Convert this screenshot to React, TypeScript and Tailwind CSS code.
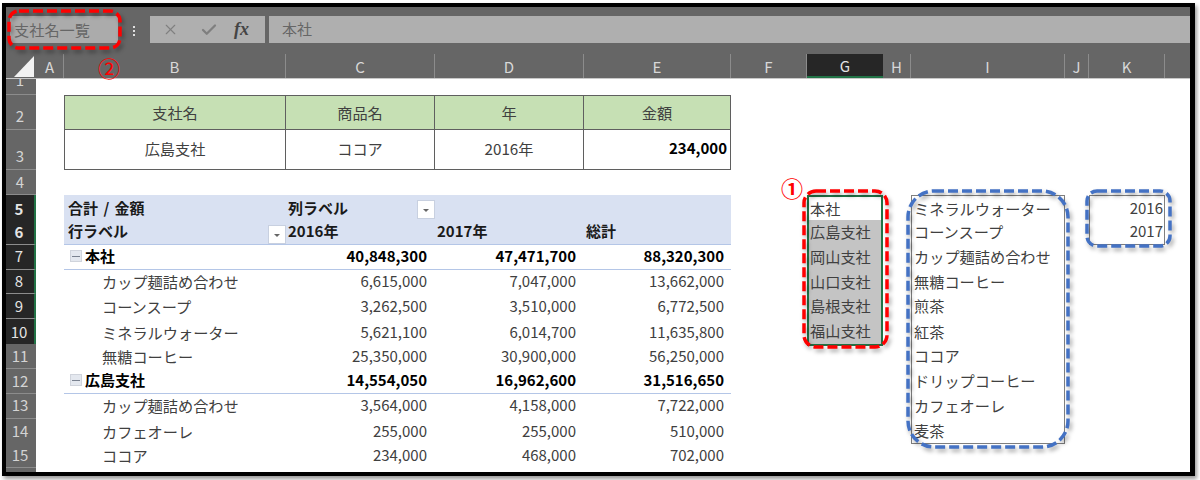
import { Check, X } from "lucide-react";
import type { ReactNode } from "react";

const font = "font-['Noto_Sans_CJK_JP','Liberation_Sans',sans-serif]";
const gridCols =
  "grid grid-cols-[30px_28px_222px_149px_149px_147px_76px_76px_28px_154px_24px_76px_25px]";

const columnHeads = ["A", "B", "C", "D", "E", "F", "G", "H", "I", "J", "K", ""];

const branches = ["本社", "広島支社", "岡山支社", "山口支社", "島根支社", "福山支社"];
const products = [
  "ミネラルウォーター",
  "コーンスープ",
  "カップ麺詰め合わせ",
  "無糖コーヒー",
  "煎茶",
  "紅茶",
  "ココア",
  "ドリップコーヒー",
  "カフェオーレ",
  "麦茶",
];
const years = ["2016", "2017"];

const pivotRows = [
  { n: 7, label: "本社", c: "40,848,300", d: "47,471,700", e: "88,320,300", group: true },
  { n: 8, label: "カップ麺詰め合わせ", c: "6,615,000", d: "7,047,000", e: "13,662,000" },
  { n: 9, label: "コーンスープ", c: "3,262,500", d: "3,510,000", e: "6,772,500" },
  { n: 10, label: "ミネラルウォーター", c: "5,621,100", d: "6,014,700", e: "11,635,800" },
  { n: 11, label: "無糖コーヒー", c: "25,350,000", d: "30,900,000", e: "56,250,000" },
  { n: 12, label: "広島支社", c: "14,554,050", d: "16,962,600", e: "31,516,650", group: true },
  { n: 13, label: "カップ麺詰め合わせ", c: "3,564,000", d: "4,158,000", e: "7,722,000" },
  { n: 14, label: "カフェオーレ", c: "255,000", d: "255,000", e: "510,000" },
  { n: 15, label: "ココア", c: "234,000", d: "468,000", e: "702,000" },
];

function RowHead({ n, active }: { n: number; active: boolean }) {
  return (
    <div
      className={`flex items-center justify-center border-b border-[#8c8c8c] pr-[2px] text-[15px] ${
        active
          ? "border-r-2 border-r-[#217346] bg-[#262626] text-[#e4e4e4]"
          : "bg-[#666666] text-[#d4d4d4]"
      }`}
    >
      {n}
    </div>
  );
}

function FilterButton() {
  return (
    <div className="absolute top-[5px] right-0 flex h-[19px] w-[18px] items-center justify-center border border-[#c8d0e0] bg-white">
      <div className="mt-[2px] h-0 w-0 border-x-[3px] border-t-[3px] border-x-transparent border-t-[#666666]" />
    </div>
  );
}

function ListCells({ n }: { n: number }) {
  const branch = branches[n - 5];
  const product = products[n - 5];
  const year = years[n - 5];
  return (
    <>
      <div />
      <div
        className={`flex items-center pl-[1px] text-[15.2px] text-[#404040] ${
          branch ? "border-x-2 border-[#217346]" : ""
        } ${branch && n > 5 ? "bg-[#c4c4c4]" : ""} ${n === 5 ? "border-t-2 pb-[4px]" : "pb-[2px]"} ${
          n === 10 ? "border-b-2" : ""
        }`}
      >
        {branch}
      </div>
      <div />
      <div
        className={`flex items-center pl-[2px] text-[15.2px] whitespace-nowrap text-[#404040] ${
          product ? "border-x border-[#7f7f7f]" : ""
        } ${n === 5 ? "border-t pb-[3px]" : "pb-[2px]"} ${n === 14 ? "border-b" : ""}`}
      >
        {product}
      </div>
      <div />
      <div
        className={`flex items-center justify-end pr-[1px] text-[15px] text-[#404040] ${
          year ? "border-x border-[#7f7f7f]" : ""
        } ${n === 5 ? "border-t pb-[3px]" : "pb-[2px]"} ${n === 6 ? "border-b" : ""}`}
      >
        {year}
      </div>
      <div />
    </>
  );
}

function Dashed({
  className,
  width,
  height,
  radius,
  color,
}: {
  className: string;
  width: number;
  height: number;
  radius: number;
  color: string;
}) {
  return (
    <svg
      className={`pointer-events-none absolute drop-shadow-[2px_3px_2px_rgba(0,0,0,0.35)] ${className}`}
      width={width}
      height={height}
    >
      <rect
        x="2"
        y="2"
        width={width - 4}
        height={height - 4}
        rx={radius}
        fill="none"
        stroke={color}
        strokeWidth="3.5"
        strokeDasharray="10 4"
      />
    </svg>
  );
}

function TopCell({ children, className }: { children: ReactNode; className: string }) {
  return <div className={`flex items-center border-r border-b border-[#5f5f5f] ${className}`}>{children}</div>;
}

export default function App() {
  return (
    <div className={`h-[480px] w-[1200px] overflow-hidden bg-white pt-[3px] pl-[2px] ${font}`}>
      <div className="relative h-[473px] w-[1193px] overflow-hidden border-y-4 border-r-[5px] border-l-4 border-black bg-white shadow-[2px_3px_4px_rgba(0,0,0,0.4)]">
        {/* formula bar */}
        <div className="flex h-[47px] items-start bg-[#666666] pt-[9px] pl-[4px]">
          <div className="flex h-[27px] w-[108px] items-center bg-[#ababab] pb-[1px] pl-[4px] text-[15.2px] text-[#666666]">
            支社名一覧
          </div>
          <div className="flex w-[32px] flex-col items-center gap-[2px] pt-[10px]">
            <span className="size-[2px] bg-[#e0e0e0]" />
            <span className="size-[2px] bg-[#e0e0e0]" />
            <span className="size-[2px] bg-[#e0e0e0]" />
          </div>
          <div className="flex h-[27px] w-[115px] items-center bg-[#afafaf] text-[#7f7f7f]">
            <X className="ml-[12px]" size={17} strokeWidth={1.6} />
            <Check className="ml-[21px]" size={18} strokeWidth={3} />
            <span className="ml-[16px] font-['Liberation_Serif',serif] text-[18px] font-bold text-[#444444] italic">
              fx
            </span>
          </div>
          <div className="ml-[4px] flex h-[27px] flex-1 items-center bg-[#afafaf] pb-[1px] pl-[13px] text-[15px] text-[#666666]">
            本社
          </div>
        </div>

        {/* column heads */}
        <div className={`${gridCols} h-[25px] border-b border-[#c8c8c8] bg-[#666666]`}>
          <div className="flex items-end justify-end pr-[2px] pb-[1px]">
            <div className="h-0 w-0 border-b-[21px] border-l-[20px] border-b-[#f2f2f2] border-l-transparent" />
          </div>
          {columnHeads.map((col, i) => (
            <div
              key={i}
              className={`flex items-center justify-center text-[15px] leading-none ${
                col === "G"
                  ? "border-b-2 border-[#217346] bg-[#262626] text-[#e4e4e4]"
                  : `${col ? "border-r border-[#8c8c8c]" : ""} text-[#d8d8d8]`
              }`}
            >
              {col}
            </div>
          ))}
        </div>

        {/* row 1 */}
        <div className={`${gridCols} h-[16px]`}>
          <div className="flex justify-center overflow-hidden border-b border-[#8c8c8c] bg-[#666666] text-[15px] leading-none text-[#d4d4d4]">
            <span className="-mt-[7px] pr-[2px]">1</span>
          </div>
        </div>

        {/* rows 2 and 3: lookup table */}
        <div className={`${gridCols} h-[35px] text-[15.2px] text-[#404040]`}>
          <div className="flex items-end justify-center border-b border-[#8c8c8c] bg-[#666666] pr-[2px] pb-[2px] text-[15px] text-[#d4d4d4]">
            2
          </div>
          <div />
          <TopCell className="justify-center border-t border-l bg-[#c6e0b4] pb-[1px]">支社名</TopCell>
          <TopCell className="justify-center border-t bg-[#c6e0b4] pb-[1px]">商品名</TopCell>
          <TopCell className="justify-center border-t bg-[#c6e0b4] pb-[1px]">年</TopCell>
          <TopCell className="justify-center border-t bg-[#c6e0b4] pb-[1px]">金額</TopCell>
        </div>
        <div className={`${gridCols} h-[40px] text-[15.2px] text-[#404040]`}>
          <div className="flex items-end justify-center border-b border-[#8c8c8c] bg-[#666666] pr-[2px] pb-[2px] text-[15px] text-[#d4d4d4]">
            3
          </div>
          <div />
          <TopCell className="justify-center border-l pb-[2px]">広島支社</TopCell>
          <TopCell className="justify-center pb-[2px]">ココア</TopCell>
          <TopCell className="justify-center pb-[2px]">2016年</TopCell>
          <TopCell className="justify-end pr-[3px] pb-[2px] text-[15px] font-bold text-black">234,000</TopCell>
        </div>

        {/* row 4 */}
        <div className={`${gridCols} h-[25px]`}>
          <RowHead n={4} active={false} />
        </div>

        {/* rows 5 and 6: pivot header */}
        <div className={`${gridCols} h-[24.85px] text-[15px] font-bold text-[#1a1a1a]`}>
          <RowHead n={5} active />
          <div />
          <div className="flex items-center bg-[#d9e1f2] pb-[2px] pl-[4px] [word-spacing:2px]">合計 / 金額</div>
          <div className="relative flex items-center bg-[#d9e1f2] pb-[2px] pl-[2px]">
            列ラベル
            <FilterButton />
          </div>
          <div className="bg-[#d9e1f2]" />
          <div className="bg-[#d9e1f2]" />
          <div className="contents font-normal">
            <ListCells n={5} />
          </div>
        </div>
        <div className={`${gridCols} h-[24.85px] text-[15px] font-bold text-[#1a1a1a]`}>
          <RowHead n={6} active />
          <div />
          <div className="relative flex items-center border-b border-[#b4c6e7] bg-[#d9e1f2] pb-[1px] pl-[4px]">
            行ラベル
            <FilterButton />
          </div>
          <div className="flex items-center border-b border-[#b4c6e7] bg-[#d9e1f2] pb-[1px] pl-[2px]">2016年</div>
          <div className="flex items-center border-b border-[#b4c6e7] bg-[#d9e1f2] pb-[1px] pl-[2px]">2017年</div>
          <div className="flex items-center border-b border-[#b4c6e7] bg-[#d9e1f2] pb-[1px] pl-[2px]">総計</div>
          <div className="contents font-normal">
            <ListCells n={6} />
          </div>
        </div>

        {/* rows 7 to 15: pivot body */}
        {pivotRows.map((row) => (
          <div key={row.n} className={`${gridCols} h-[24.85px] text-[15px] text-[#404040]`}>
            <RowHead n={row.n} active={row.n <= 10} />
            <div />
            <div
              className={`flex items-center pb-[1px] whitespace-nowrap ${
                row.group
                  ? "border-b border-[#b4c6e7] pl-[6px] font-bold text-black"
                  : "pl-[38px] text-[15.2px]"
              }`}
            >
              {row.group && (
                <span className="mr-[3px] flex size-[12px] items-center justify-center border border-[#d0d4dc] bg-[#e4e8ef]">
                  <span className="h-px w-[8px] bg-[#7a8290]" />
                </span>
              )}
              {row.label}
            </div>
            {[row.c, row.d, row.e].map((value, i) => (
              <div
                key={i}
                className={`flex items-center justify-end pb-[1px] ${i === 2 ? "pr-[7px]" : "pr-[8px]"} ${
                  row.group ? "border-b border-[#b4c6e7] font-bold text-black" : ""
                }`}
              >
                {value}
              </div>
            ))}
            <ListCells n={row.n} />
          </div>
        ))}

        <div className={`${gridCols} h-[10px]`}>
          <div className="bg-[#666666]" />
        </div>

        {/* hand-drawn marks over the sheet */}
        <Dashed className="top-[2px] left-px" width={115} height={41} radius={10} color="#ff0000" />
        <Dashed className="top-[182px] left-[796px]" width={87} height={160} radius={12} color="#ff0000" />
        <Dashed className="top-[182px] left-[900px]" width={164} height={260} radius={26} color="#4472c4" />
        <Dashed className="top-[182px] left-[1079px]" width={87} height={59} radius={10} color="#4472c4" />
        <span className="absolute top-[44px] left-[92px] text-[22px] leading-[32px] text-[#ff0000]">②</span>
        <span className="absolute top-[164px] left-[775px] text-[22px] leading-[32px] font-bold text-[#ff0000]">①</span>
      </div>
    </div>
  );
}
